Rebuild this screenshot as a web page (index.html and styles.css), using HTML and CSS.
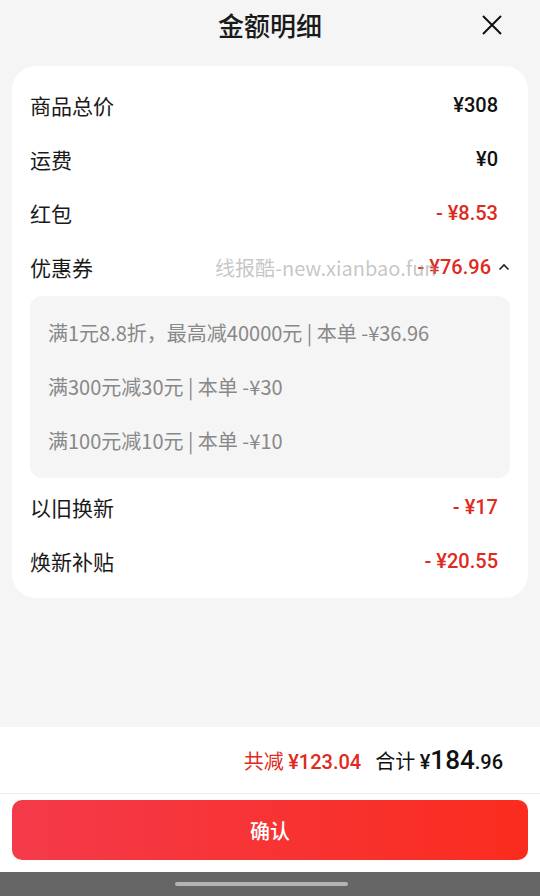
FILE: index.html
```html
<!DOCTYPE html>
<html lang="zh-CN">
<head>
    <meta charset="UTF-8">
    <meta name="viewport" content="width=device-width, initial-scale=1.0">
    <title>金额明细</title>
    <link rel="stylesheet" href="styles.css">
</head>
<body>
    <div class="sheet">
        <div class="header">
            <h1 class="title">金额明细</h1>
            <button class="close" aria-label="关闭">
                <svg width="20" height="20" viewBox="0 0 20 20"><path d="M1 1L19 19M19 1L1 19" stroke="#111" stroke-width="2" fill="none"/></svg>
            </button>
        </div>

        <div class="card">
            <div class="row">
                <span class="label">商品总价</span>
                <span class="value">¥308</span>
            </div>
            <div class="row">
                <span class="label">运费</span>
                <span class="value">¥0</span>
            </div>
            <div class="row">
                <span class="label">红包</span>
                <span class="value red">- ¥8.53</span>
            </div>
            <div class="row row-coupon">
                <span class="label">优惠券</span>
                <span class="value red">- ¥76.96</span>
                <svg class="chevron" width="12" height="8" viewBox="0 0 12 8"><path d="M1.5 6.5L6 2L10.5 6.5" stroke="#222" stroke-width="1.6" fill="none"/></svg>
                <span class="watermark">线报酷-new.xianbao.fun</span>
            </div>
            <div class="coupons">
                <div class="coupon">满1元8.8折，最高减40000元 | 本单 -¥36.96</div>
                <div class="coupon">满300元减30元 | 本单 -¥30</div>
                <div class="coupon">满100元减10元 | 本单 -¥10</div>
            </div>
            <div class="row">
                <span class="label">以旧换新</span>
                <span class="value red">- ¥17</span>
            </div>
            <div class="row">
                <span class="label">焕新补贴</span>
                <span class="value red">- ¥20.55</span>
            </div>
        </div>

        <div class="spacer"></div>

        <div class="summary">
            <span class="saved">共减 <span class="num">¥123.04</span></span>
            <span class="total">合计 <span class="num">¥<b>184</b>.96</span></span>
        </div>
        <div class="actions">
            <button class="confirm">确认</button>
        </div>
        <div class="navbar"><span class="handle"></span></div>
    </div>
</body>
</html>
```

FILE: styles.css
```css
body {
    margin: 0;
    background-color: #f5f5f5;
    font-family: "Noto Sans CJK SC", "Noto Sans", sans-serif;
    color: #1a1a1a;
}

.sheet {
    display: flex;
    flex-direction: column;
    height: 896px;
}

.header {
    position: relative;
    display: flex;
    justify-content: center;
    align-items: center;
    height: 50px;
}

.title {
    margin: 0;
    font-size: 26px;
    font-weight: 500;
    line-height: 50px;
}

.close {
    position: absolute;
    right: 38px;
    top: 15px;
    padding: 0;
    border: none;
    background: none;
    width: 20px;
    height: 20px;
    display: flex;
}

.card {
    position: relative;
    margin: 16px 12px 0;
    padding: 12px 18px 10px;
    background-color: #fff;
    border-radius: 24px;
}

.row {
    position: relative;
    display: flex;
    align-items: center;
    justify-content: space-between;
    height: 54px;
    padding-right: 12px;
}

.label {
    font-size: 21px;
    color: #1a1a1a;
}

.value {
    font-family: Roboto, "Noto Sans", sans-serif;
    font-size: 20px;
    font-weight: 500;
    color: #111;
}

.red {
    color: #de2a20;
}

.row-coupon {
    padding-right: 0;
}

.row-coupon .label {
    flex: 1;
}

.chevron {
    margin-left: 7px;
}

.watermark {
    position: absolute;
    left: 185px;
    top: 13px;
    font-size: 20px;
    color: rgba(160, 160, 160, 0.6);
    white-space: nowrap;
    pointer-events: none;
}

.coupons {
    margin: 2px 0 2px;
    padding: 10px 18px;
    background-color: #f5f5f5;
    border-radius: 12px;
}

.coupon {
    height: 54px;
    line-height: 54px;
    font-size: 20px;
    color: #888;
}

.spacer {
    flex: 1;
}

.summary {
    display: flex;
    justify-content: flex-end;
    align-items: baseline;
    gap: 14px;
    height: 66px;
    line-height: 66px;
    padding-right: 37px;
    background-color: #fff;
    border-bottom: 1px solid #eee;
    font-size: 20px;
}

.summary .num {
    font-family: Roboto, "Noto Sans", sans-serif;
    font-weight: 500;
}

.saved {
    color: #de2a20;
}

.total {
    color: #111;
}

.total b {
    font-size: 26px;
    font-weight: 500;
}

.actions {
    padding: 6px 12px 12px;
    background-color: #fff;
}

.confirm {
    display: block;
    width: 100%;
    height: 60px;
    border: none;
    border-radius: 10px;
    background: linear-gradient(90deg, #f43a4a, #fa2c1e);
    color: #fff;
    font-family: "Noto Sans CJK SC", sans-serif;
    font-size: 20px;
    font-weight: 500;
}

.navbar {
    display: flex;
    align-items: center;
    height: 24px;
    padding-left: 175px;
    background-color: #666;
}

.handle {
    width: 173px;
    height: 4px;
    border-radius: 2px;
    background-color: #b5b5b5;
}
```
